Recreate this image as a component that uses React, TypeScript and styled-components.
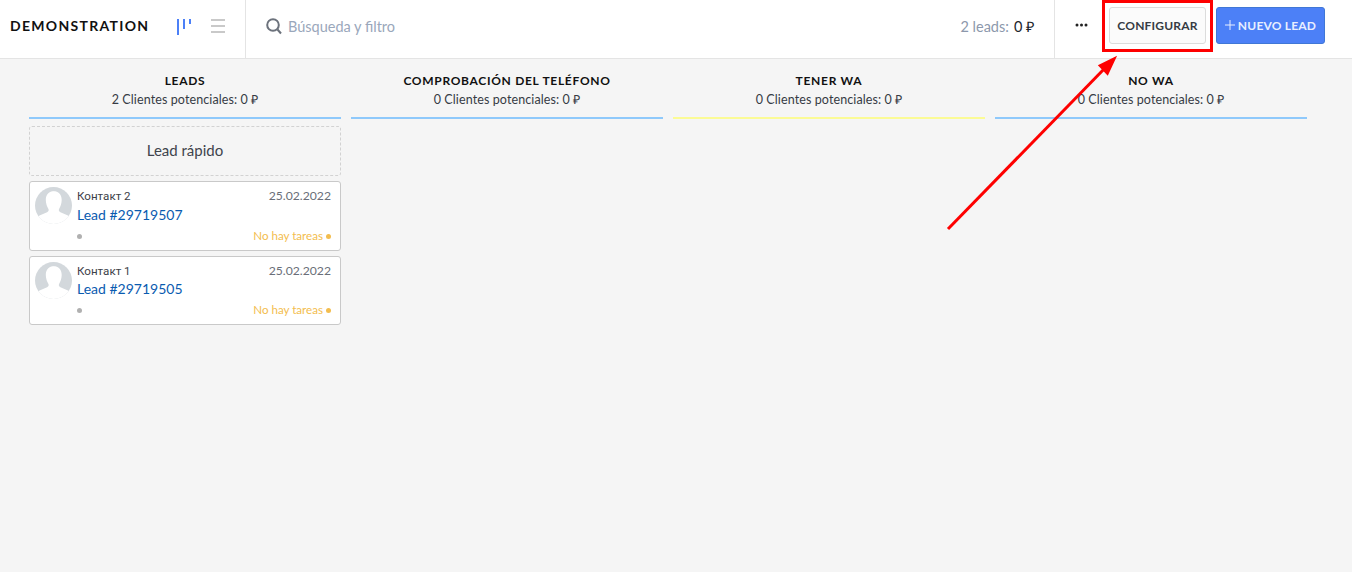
import React from 'react';
import styled, { createGlobalStyle } from 'styled-components';

const GlobalStyle = createGlobalStyle`
  html, body {
    margin: 0;
    padding: 0;
    height: 100%;
    background: #f5f5f5;
    font-family: 'Lato', 'Liberation Sans', sans-serif;
    overflow: hidden;
  }
`;

const SCPage = styled.div`
  position: relative;
  width: 1352px;
  height: 572px;
  background: #f5f5f5;
`;

const SCHeader = styled.header`
  display: flex;
  align-items: stretch;
  height: 58px;
  background: #fff;
  border-bottom: 1px solid #e4e4e4;
`;

const SCTitleBlock = styled.div`
  display: flex;
  align-items: center;
  width: 246px;
  box-sizing: border-box;
  padding-left: 10px;
  border-right: 1px solid #e4e4e4;
`;

const SCTitle = styled.div`
  width: 167px;
  font-size: 14px;
  font-weight: 700;
  letter-spacing: 1.3px;
  color: #111;
  margin-top: -8px;
`;

const SCViewIcon = styled.svg`
  display: block;
  margin-top: -4px;
  margin-right: 18px;
`;

const SCSearch = styled.div`
  flex: 1;
  display: flex;
  align-items: center;
  gap: 5px;
  padding-left: 20px;
  margin-top: -6px;
  font-size: 14.5px;
  color: #9aa7bb;
`;

const SCTotals = styled.div`
  display: flex;
  align-items: center;
  gap: 5px;
  margin-top: -6px;
  padding-right: 20px;
  font-size: 14.5px;
  color: #8c98ac;
`;

const SCTotalsValue = styled.span`
  color: #20252b;
`;

const SCActions = styled.div`
  display: flex;
  align-items: flex-start;
  width: 298px;
  box-sizing: border-box;
  padding: 7px 0 0 20px;
  border-left: 1px solid #e4e4e4;
`;

const SCDots = styled.svg`
  display: block;
  margin: 16px 21px 0 0;
`;

const SCButton = styled.button<{ $primary?: boolean }>`
  display: flex;
  align-items: center;
  justify-content: center;
  gap: 3px;
  height: 37px;
  box-sizing: border-box;
  padding: 0 0 1px;
  width: ${(p) => (p.$primary ? '109px' : '97px')};
  margin-left: ${(p) => (p.$primary ? '10px' : '0')};
  border-radius: 3px;
  border: 1px solid ${(p) => (p.$primary ? '#4077d6' : '#dcdcdc')};
  background: ${(p) => (p.$primary ? '#4c80f7' : '#fbfbfb')};
  color: ${(p) => (p.$primary ? '#e8efff' : '#363b44')};
  font-family: inherit;
  font-size: 12px;
  font-weight: 700;
  letter-spacing: 0.2px;
`;

const SCPlus = styled.svg`
  display: block;
  flex: none;
`;

const SCBoard = styled.main`
  display: grid;
  grid-template-columns: repeat(4, 312px);
  column-gap: 10px;
  padding: 13px 0 0 29px;
`;

const SCColumn = styled.section`
  display: flex;
  flex-direction: column;
`;

const SCColumnHead = styled.div<{ $line: string }>`
  height: 45px;
  text-align: center;
  border-bottom: 2px solid ${(p) => p.$line};
`;

const SCColumnTitle = styled.div`
  font-size: 12px;
  line-height: 17px;
  font-weight: 700;
  letter-spacing: 0.7px;
  color: #111;
`;

const SCColumnSub = styled.div`
  font-size: 12.5px;
  line-height: 17px;
  margin-top: 2px;
  letter-spacing: 0.1px;
  color: #363b44;
`;

const SCQuick = styled.div`
  margin-top: 7px;
  height: 50px;
  box-sizing: border-box;
  display: flex;
  align-items: center;
  justify-content: center;
  padding-bottom: 2px;
  border: 1px dashed #d2d2d2;
  border-radius: 3px;
  font-size: 15px;
  color: #3f444d;
`;

const SCCard = styled.article`
  display: flex;
  height: 70px;
  margin-top: 5px;
  box-sizing: border-box;
  padding: 5px 9px 0 5px;
  background: #fff;
  border: 1px solid #c9c9c9;
  border-radius: 3px;
  & + & {
    height: 69px;
  }
`;

const SCAvatar = styled.svg`
  flex: none;
  display: block;
  margin-right: 5px;
`;

const SCCardBody = styled.div`
  flex: 1;
  display: flex;
  flex-direction: column;
  padding-top: 1px;
`;

const SCCardRow = styled.div`
  display: flex;
  align-items: center;
  justify-content: space-between;
`;

const SCContact = styled.span`
  font-family: 'Roboto', 'Liberation Sans', sans-serif;
  font-size: 11.6px;
  line-height: 16px;
  color: #3d4149;
`;

const SCDate = styled.span`
  font-size: 12.2px;
  line-height: 16px;
  color: #6a6f79;
`;

const SCLeadLink = styled.a`
  font-size: 14px;
  line-height: 20px;
  margin-top: 1px;
  color: #0a5bb0;
  ${SCCard} + ${SCCard} & {
    margin-top: 0;
  }
`;

const SCCardFooter = styled(SCCardRow)`
  margin-top: 3px;
`;

const SCDot = styled.span<{ $color: string }>`
  display: inline-block;
  width: 5px;
  height: 5px;
  border-radius: 50%;
  background: ${(p) => p.$color};
`;

const SCNoTasks = styled.span`
  display: inline-flex;
  align-items: center;
  gap: 3px;
  font-size: 11.6px;
  line-height: 16px;
  color: #f3bd4e;
`;

const SCOverlay = styled.svg`
  position: absolute;
  left: 0;
  top: 0;
  pointer-events: none;
`;

const columns = [
  { title: 'LEADS', sub: '2 Clientes potenciales:', line: '#8fc9fb' },
  { title: 'COMPROBACIÓN DEL TELÉFONO', sub: '0 Clientes potenciales:', line: '#8fc9fb' },
  { title: 'TENER WA', sub: '0 Clientes potenciales:', line: '#fbfb95' },
  { title: 'NO WA', sub: '0 Clientes potenciales:', line: '#8fc9fb' },
];

const leads = [
  { contact: 'Контакт 2', name: 'Lead #29719507' },
  { contact: 'Контакт 1', name: 'Lead #29719505' },
];

const Avatar = () => (
  <SCAvatar width="37" height="37" viewBox="0 0 37 37">
    <defs>
      <clipPath id="avatar-clip">
        <circle cx="18.5" cy="18.5" r="18.5" />
      </clipPath>
    </defs>
    <circle cx="18.5" cy="18.5" r="18.5" fill="#d3d8dc" />
    <path
      clipPath="url(#avatar-clip)"
      d="M18.5 4c4.9 0 8.2 3.7 8.2 9 0 3.6-1.3 6.6-2.5 8.8-.8 1.5-.3 2.8 1.2 3.5l7 3c1.4.6 2.4 1.3 3.6 2.6V37H1.5v-6.1c1.2-1.3 2.2-2 3.6-2.6l7-3c1.5-.7 2-2 1.2-3.5-1.2-2.2-2.5-5.2-2.5-8.8 0-5.3 3.3-9 8.2-9z"
      fill="#fff"
    />
  </SCAvatar>
);

const App = () => {
  return (
    <SCPage>
      <GlobalStyle />
      <SCHeader>
        <SCTitleBlock>
          <SCTitle>DEMONSTRATION</SCTitle>
          <SCViewIcon width="16" height="16" viewBox="0 0 16 16">
            <rect x="0" y="0" width="2" height="16" fill="#4c80f7" />
            <rect x="6" y="0" width="2" height="10" fill="#4c80f7" />
            <rect x="12" y="0" width="2" height="5" fill="#4c80f7" />
          </SCViewIcon>
          <SCViewIcon width="14" height="16" viewBox="0 0 14 16">
            <rect x="0" y="0" width="14" height="2" fill="#c9c9c9" />
            <rect x="0" y="6" width="14" height="2" fill="#c9c9c9" />
            <rect x="0" y="12" width="14" height="2" fill="#c9c9c9" />
          </SCViewIcon>
        </SCTitleBlock>
        <SCSearch>
          <svg width="17" height="17" viewBox="0 0 17 17" fill="none">
            <circle cx="7" cy="7" r="5.8" stroke="#6c727c" strokeWidth="2" />
            <path d="M11.5 11.5l3.5 4" stroke="#6c727c" strokeWidth="2" />
          </svg>
          Búsqueda y filtro
        </SCSearch>
        <SCTotals>
          2 leads: <SCTotalsValue>0 ₽</SCTotalsValue>
        </SCTotals>
        <SCActions>
          <SCDots width="13" height="4" viewBox="0 0 13 4">
            <circle cx="2" cy="2" r="1.5" fill="#222" />
            <circle cx="6.5" cy="2" r="1.5" fill="#222" />
            <circle cx="11" cy="2" r="1.5" fill="#222" />
          </SCDots>
          <SCButton>CONFIGURAR</SCButton>
          <SCButton $primary>
            <SCPlus width="10" height="10" viewBox="0 0 10 10">
              <path d="M5 0v10M0 5h10" stroke="#e8efff" strokeWidth="1" />
            </SCPlus>
            NUEVO LEAD
          </SCButton>
        </SCActions>
      </SCHeader>
      <SCBoard>
        {columns.map((col, index) => (
          <SCColumn key={col.title}>
            <SCColumnHead $line={col.line}>
              <SCColumnTitle>{col.title}</SCColumnTitle>
              <SCColumnSub>{col.sub} 0 ₽</SCColumnSub>
            </SCColumnHead>
            {index === 0 && (
              <>
                <SCQuick>Lead rápido</SCQuick>
                {leads.map((lead) => (
                  <SCCard key={lead.name}>
                    <Avatar />
                    <SCCardBody>
                      <SCCardRow>
                        <SCContact>{lead.contact}</SCContact>
                        <SCDate>25.02.2022</SCDate>
                      </SCCardRow>
                      <SCLeadLink>{lead.name}</SCLeadLink>
                      <SCCardFooter>
                        <SCDot $color="#b0b0b0" />
                        <SCNoTasks>
                          No hay tareas <SCDot $color="#f3bd4e" />
                        </SCNoTasks>
                      </SCCardFooter>
                    </SCCardBody>
                  </SCCard>
                ))}
              </>
            )}
          </SCColumn>
        ))}
      </SCBoard>
      <SCOverlay width="1352" height="572" viewBox="0 0 1352 572" fill="none">
        <rect x="1103.5" y="1.5" width="108" height="49" stroke="#fe0000" strokeWidth="3" />
        <path d="M948 229L1106 67" stroke="#fe0000" strokeWidth="3" />
        <path d="M1115 58L1099.5 65.5L1107.5 74z" fill="#fe0000" stroke="#fe0000" strokeWidth="2" />
      </SCOverlay>
    </SCPage>
  );
};

export default App;
